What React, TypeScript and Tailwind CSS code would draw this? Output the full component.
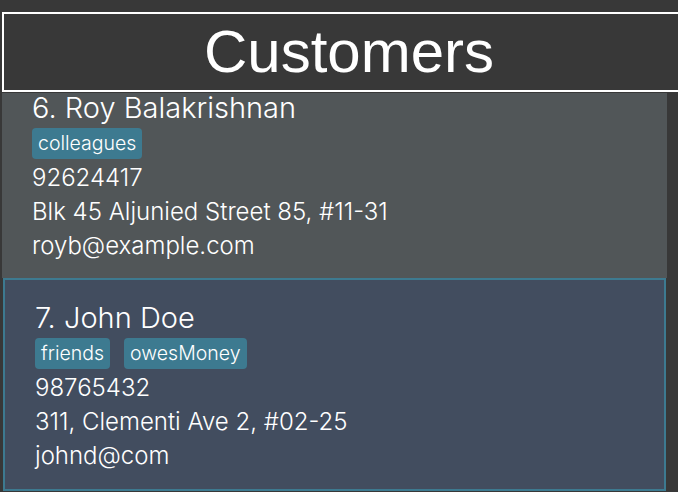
export default function App() {
  const customers = [
    {
      index: 6,
      name: "Roy Balakrishnan",
      tags: ["colleagues"],
      phone: "92624417",
      address: "Blk 45 Aljunied Street 85, #11-31",
      email: "royb@example.com",
      selected: false
    },
    {
      index: 7,
      name: "John Doe",
      tags: ["friends", "owesMoney"],
      phone: "98765432",
      address: "311, Clementi Ave 2, #02-25",
      email: "johnd@com",
      selected: true
    }
  ];

  return (
    <div className="w-[678px] h-[492px] overflow-hidden bg-[#383838] pt-[12px] font-['Inter',sans-serif] text-white">
      {/* Title bar */}
      <div className="ml-[2px] w-[694px] h-[80px] border-2 border-white flex items-center justify-center">
        <h1 className="font-['Liberation_Sans',Arial,sans-serif] text-[60px] leading-none">Customers</h1>
      </div>

      {/* List + scrollbar */}
      <div className="flex h-[400px] pt-[1px]">
        <div className="ml-[2px] w-[665px] overflow-hidden">
          <div className="-mt-[25px]">
            {customers.map((c) => (
              <div
                key={c.index}
                className={
                  c.selected
                    ? "mx-[1px] bg-[#424d5f] border-2 border-[#3d7a90] pl-[30px] pt-[18px] pb-[16px]"
                    : "bg-[#515658] pl-[30px] pt-[20px] pb-[15px]"
                }
              >
                <div className="text-[29px] leading-[40px] font-light">
                  {c.index}. {c.name}
                </div>
                <div className="flex gap-[14px]">
                  {c.tags.map((t) => (
                    <span key={t} className="bg-[#3d7a90] rounded-[4px] px-[6px] h-[31px] leading-[31px] text-[19.5px] font-light">
                      {t}
                    </span>
                  ))}
                </div>
                <div className="pt-[2px] text-[24px] leading-[34px] font-light">
                  <div>{c.phone}</div>
                  <div>{c.address}</div>
                  <div>{c.email}</div>
                </div>
              </div>
            ))}
          </div>
        </div>
        <div className="flex-1 bg-[#383838]"></div>
      </div>
    </div>
  );
}
